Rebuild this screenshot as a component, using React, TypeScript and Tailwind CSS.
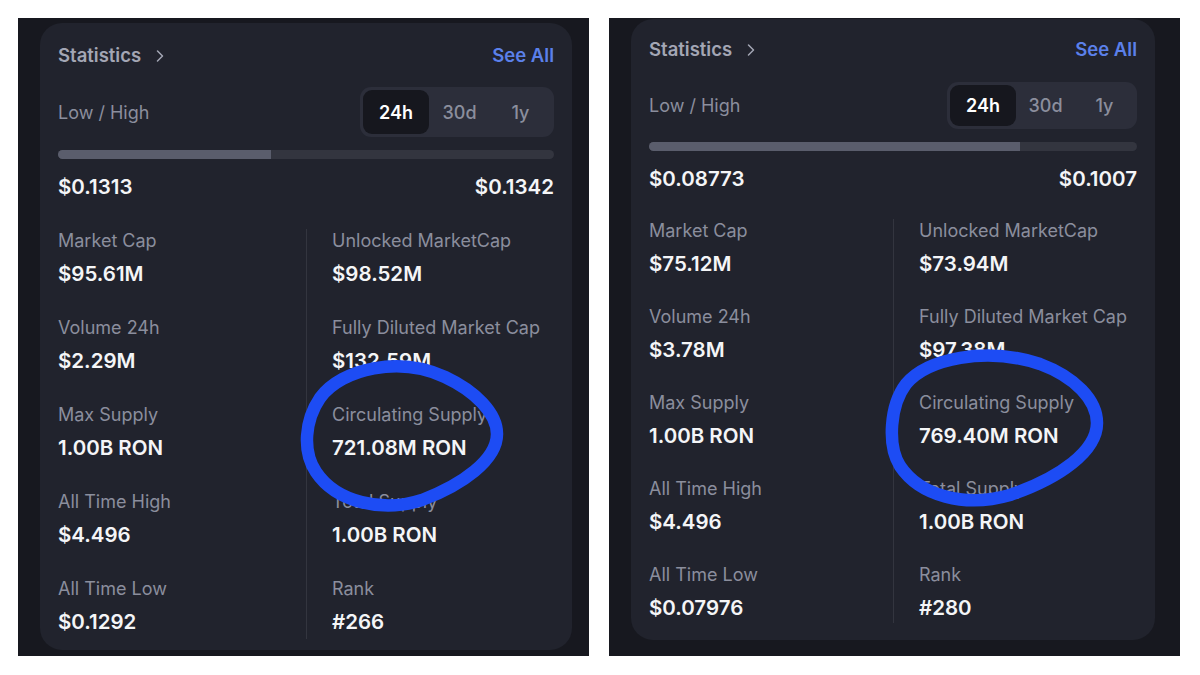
import React from "react";
import { ChevronRight } from "lucide-react";

interface Stat {
  label: string;
  value: string;
}

interface PanelData {
  low: string;
  high: string;
  fill: number;
  left: Stat[];
  right: Stat[];
  loop: string;
}

// loop paths are in page coordinates (the svg viewBox maps them back onto the panel)
const panels: PanelData[] = [
  {
    low: "$0.1313",
    high: "$0.1342",
    fill: 43,
    left: [
      { label: "Market Cap", value: "$95.61M" },
      { label: "Volume 24h", value: "$2.29M" },
      { label: "Max Supply", value: "1.00B RON" },
      { label: "All Time High", value: "$4.496" },
      { label: "All Time Low", value: "$0.1292" },
    ],
    right: [
      { label: "Unlocked MarketCap", value: "$98.52M" },
      { label: "Fully Diluted Market Cap", value: "$132.59M" },
      { label: "Circulating Supply", value: "721.08M RON" },
      { label: "Total Supply", value: "1.00B RON" },
      { label: "Rank", value: "#266" },
    ],
    loop: "M 320 398 C 342 368, 400 356, 445 377 C 475 391, 497 413, 497 434 C 497 460, 462 485, 422 500 C 382 513, 336 502, 316 472 C 302 451, 305 420, 320 398 Z",
  },
  {
    low: "$0.08773",
    high: "$0.1007",
    fill: 76,
    left: [
      { label: "Market Cap", value: "$75.12M" },
      { label: "Volume 24h", value: "$3.78M" },
      { label: "Max Supply", value: "1.00B RON" },
      { label: "All Time High", value: "$4.496" },
      { label: "All Time Low", value: "$0.07976" },
    ],
    right: [
      { label: "Unlocked MarketCap", value: "$73.94M" },
      { label: "Fully Diluted Market Cap", value: "$97.38M" },
      { label: "Circulating Supply", value: "769.40M RON" },
      { label: "Total Supply", value: "1.00B RON" },
      { label: "Rank", value: "#280" },
    ],
    loop: "M 906 384 C 927 359, 985 346, 1040 364 C 1075 377, 1097 400, 1097 423 C 1097 451, 1060 478, 1010 495 C 965 508, 920 496, 900 466 C 887 445, 890 405, 906 384 Z",
  },
];

const StatItem = ({ stat }: { stat: Stat }) => (
  <div className="flex flex-col gap-[9px] h-[57px]">
    <span className="text-[18px] leading-6 text-[#8b8e9d]">{stat.label}</span>
    <span className="text-[20.5px] leading-6 font-semibold text-[#f4f5f7]">
      {stat.value}
    </span>
  </div>
);

const Panel = ({ data, idx }: { data: PanelData; idx: number }) => {
  const first = idx === 0;
  return (
    <div
      className={`relative w-[571px] h-[638px] bg-[#17181f] ${
        first ? "pl-[22px] pr-[17px] pt-[5px]" : "pl-[22px] pr-[25px] pt-[1px]"
      }`}
    >
      <div
        className={`bg-[#21232d] rounded-[22px] px-[18px] ${
          first ? "h-[627px] pt-[19px]" : "h-[621px] pt-[17px]"
        }`}
      >
        <div className="flex items-center justify-between h-7">
          <div className="flex items-center gap-[9px]">
            <span className="text-[18.5px] font-semibold text-[#a3a6b4]">Statistics</span>
            <ChevronRight size={20} strokeWidth={1.8} className="text-[#a3a6b4]" />
          </div>
          <span className="text-[18.5px] font-semibold text-[#5b80ea]">See All</span>
        </div>

        <div className={`flex items-center justify-between ${first ? "mt-[17px]" : "mt-[18px]"}`}>
          <span className="text-[18px] text-[#8b8e9d]">Low / High</span>
          <div
            className={`flex items-center p-[3px] rounded-[11px] bg-[#2c2e3a] ${
              first ? "w-[194px] h-[50px]" : "w-[190px] h-[47px]"
            }`}
          >
            <div className="w-[66px] h-full flex items-center justify-center rounded-[9px] bg-[#16171e] text-[18px] font-semibold text-white">
              24h
            </div>
            <div className="flex-1 h-full flex items-center justify-center text-[18px] font-medium text-[#8b8e9d]">
              30d
            </div>
            <div className="flex-1 h-full flex items-center justify-center text-[18px] font-medium text-[#8b8e9d]">
              1y
            </div>
          </div>
        </div>

        <div className="mt-[13px] h-[9px] rounded-full bg-[#33353f] overflow-hidden">
          <div className="h-full bg-[#5a5d6c]" style={{ width: `${data.fill}%` }} />
        </div>

        <div className="mt-[16px] flex justify-between text-[20.5px] leading-6 font-semibold text-[#f4f5f7]">
          <span>{data.low}</span>
          <span>{data.high}</span>
        </div>

        <div className={`grid grid-cols-2 ${first ? "mt-[30px]" : "mt-[28px]"}`}>
          <div className={`flex flex-col ${first ? "gap-[30px]" : "gap-[29px]"}`}>
            {data.left.map((s) => (
              <StatItem key={s.label} stat={s} />
            ))}
          </div>
          <div
            className={`flex flex-col border-l border-[#33353f] pl-[25px] ${
              first ? "gap-[30px] pb-[5px]" : "gap-[29px] pb-[3px]"
            }`}
          >
            {data.right.map((s) => (
              <StatItem key={s.label} stat={s} />
            ))}
          </div>
        </div>
      </div>

      {/* hand-drawn marker loop over the screenshot */}
      <svg
        className="absolute inset-0 pointer-events-none"
        width="571"
        height="638"
        viewBox={first ? "18 18 571 638" : "609 18 571 638"}
      >
        <path
          d={data.loop}
          fill="none"
          stroke="#1d4cf4"
          strokeWidth="12.5"
          strokeLinecap="round"
          strokeLinejoin="round"
        />
      </svg>
    </div>
  );
};

export default function App() {
  return (
    <div
      className="w-[1200px] h-[675px] bg-white flex gap-[20px] pt-[18px] pl-[18px]"
      style={{ fontFamily: "Inter, 'Noto Sans', sans-serif" }}
    >
      {panels.map((p, i) => (
        <Panel key={i} data={p} idx={i} />
      ))}
    </div>
  );
}
